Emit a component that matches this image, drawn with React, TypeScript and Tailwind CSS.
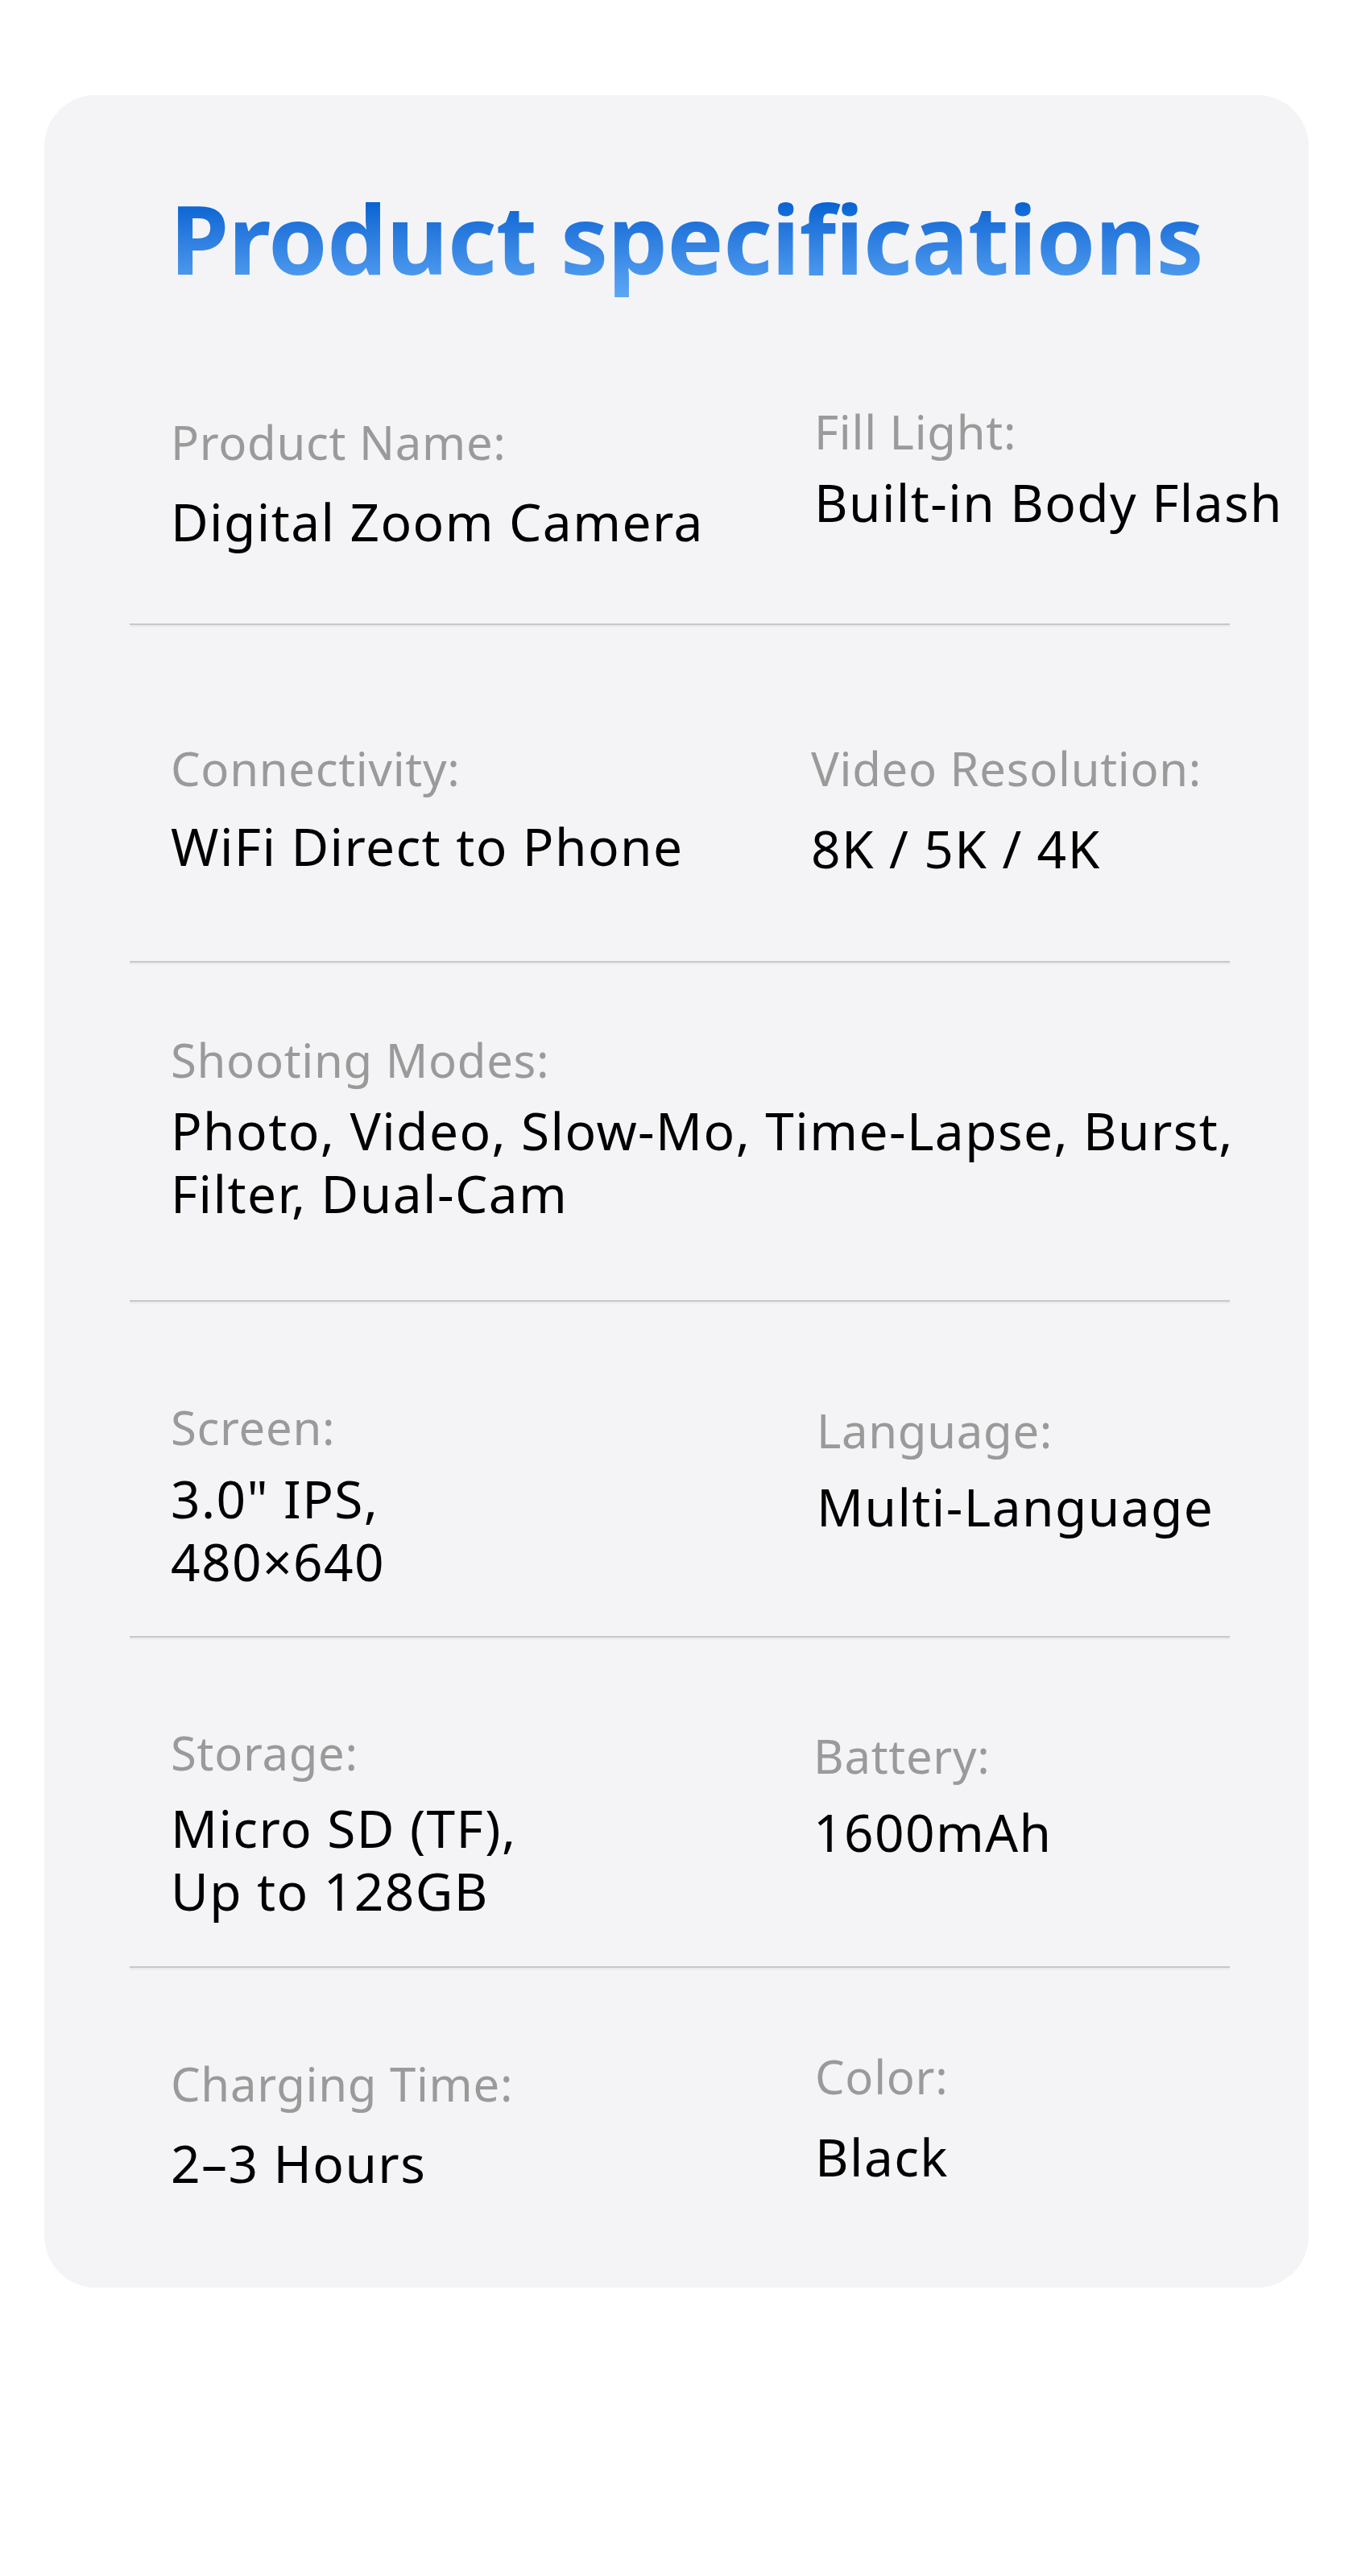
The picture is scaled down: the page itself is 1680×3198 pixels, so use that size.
type Cell = {
  label: string;
  lines: string[];
  top: number;
  gap: number;
  shift?: number;
};

type Row = {
  height: number;
  cells: Cell[];
};

const rows: Row[] = [
  {
    height: 408,
    cells: [
      { label: "Product Name:", lines: ["Digital Zoom Camera"], top: 148, gap: 25 },
      { label: "Fill Light:", lines: ["Built-in Body Flash"], top: 135, gap: 14, shift: 4 },
    ],
  },
  {
    height: 417,
    cells: [
      { label: "Connectivity:", lines: ["WiFi Direct to Phone"], top: 143, gap: 23 },
      { label: "Video Resolution:", lines: ["8K / 5K / 4K"], top: 143, gap: 26 },
    ],
  },
  {
    height: 419,
    cells: [
      {
        label: "Shooting Modes:",
        lines: ["Photo, Video, Slow-Mo, Time-Lapse, Burst,", "Filter, Dual-Cam"],
        top: 86,
        gap: 14,
      },
    ],
  },
  {
    height: 415,
    cells: [
      { label: "Screen:", lines: ['3.0" IPS,', "480×640"], top: 121, gap: 15 },
      { label: "Language:", lines: ["Multi-Language"], top: 125, gap: 21, shift: 7 },
    ],
  },
  {
    height: 408,
    cells: [
      { label: "Storage:", lines: ["Micro SD (TF),", "Up to 128GB"], top: 108, gap: 20 },
      { label: "Battery:", lines: ["1600mAh"], top: 112, gap: 21, shift: 3 },
    ],
  },
  {
    height: 397,
    cells: [
      { label: "Charging Time:", lines: ["2–3 Hours"], top: 109, gap: 25 },
      { label: "Color:", lines: ["Black"], top: 100, gap: 26, shift: 5 },
    ],
  },
];

function SpecCell({ cell, wide }: { cell: Cell; wide: boolean }) {
  return (
    <div
      className={wide ? "col-span-2" : ""}
      style={{ marginTop: cell.top, marginLeft: cell.shift ?? 0 }}
    >
      <div className="text-[58px] leading-[70px] tracking-[0.7px] text-[#9a9a9a]">{cell.label}</div>
      <div
        className="text-[64px] leading-[78px] tracking-[1.4px] text-black whitespace-nowrap"
        style={{ marginTop: cell.gap }}
      >
        {cell.lines.map((line) => (
          <div key={line}>{line}</div>
        ))}
      </div>
    </div>
  );
}

export default function App() {
  return (
    <div className="min-h-[3198px] bg-white pt-[118px] font-['Noto_Sans',sans-serif]">
      <div className="mx-[55px] rounded-[64px] bg-[#f4f4f6] pt-[108px] pl-[106px] pr-[98px]">
        <h1 className="pl-[50px] text-[118px] font-bold leading-[140px] tracking-[-0.8px]">
          <span className="bg-linear-to-b from-[#0061d1] from-20% to-[#60abf7] bg-clip-text text-transparent">
            Product specifications
          </span>
        </h1>

        {rows.map((row, i) => (
          <div key={i}>
            <div
              className="grid grid-cols-[795px_1fr] items-start pl-[51px]"
              style={{ height: row.height }}
            >
              {row.cells.map((cell) => (
                <SpecCell key={cell.label} cell={cell} wide={row.cells.length === 1} />
              ))}
            </div>
            {i < rows.length - 1 && (
              <div className="h-[2px] bg-[#c8c8ca] shadow-[0_2px_2px_rgba(0,0,0,0.06)]" />
            )}
          </div>
        ))}
      </div>
    </div>
  );
}
